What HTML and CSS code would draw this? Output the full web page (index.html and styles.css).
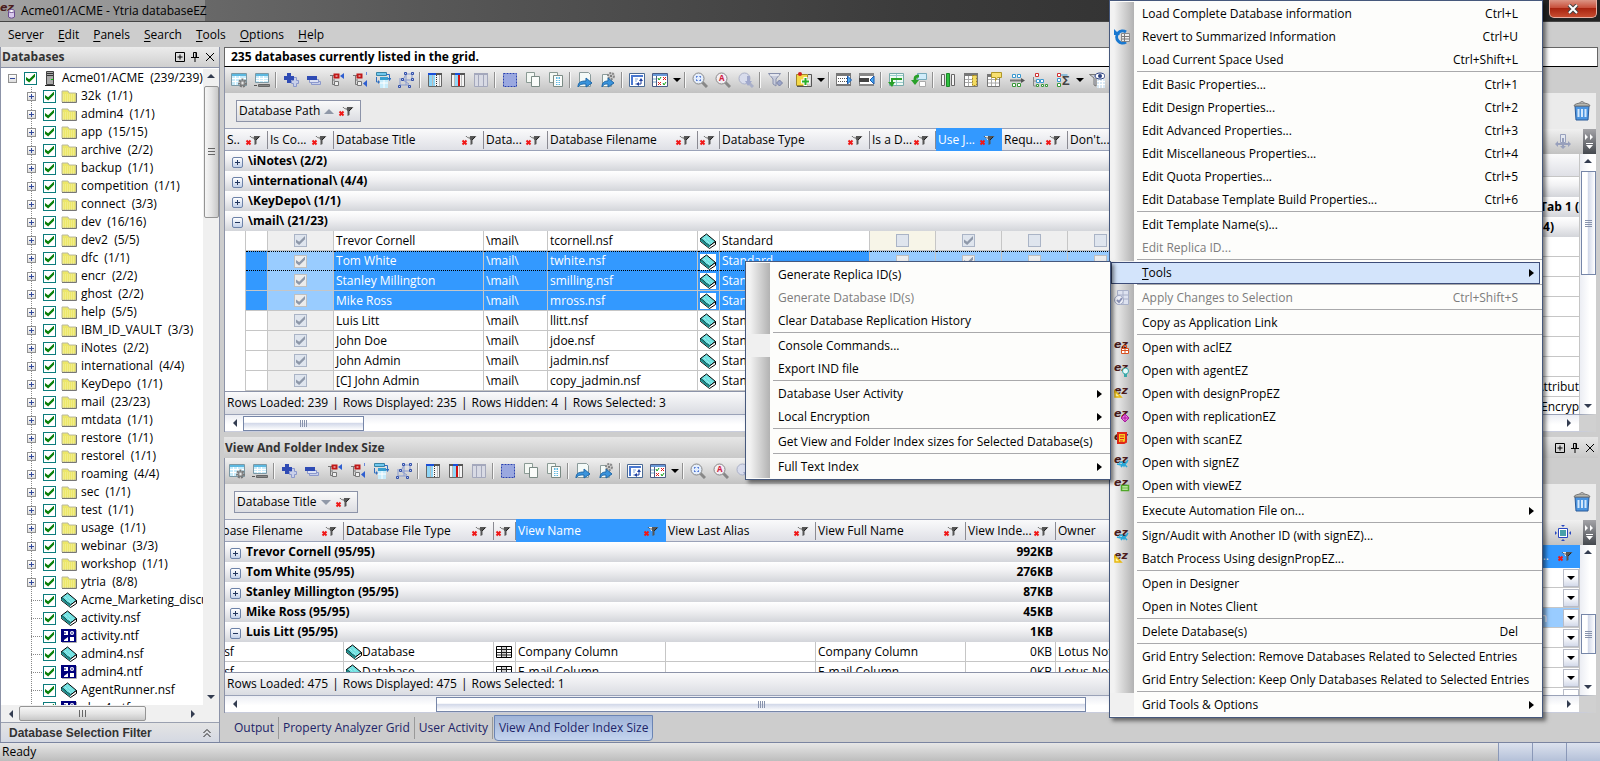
FILE: index.html
```html
<!DOCTYPE html>
<html lang="en">
<head>
    <meta charset="UTF-8">
    <meta name="viewport" content="width=device-width, initial-scale=1.0">
    <title>Acme01/ACME - Ytria databaseEZ</title>
    <link rel="stylesheet" href="styles.css">
</head>
<body>
    <!-- Icon sprite -->
    <svg class="sprite" aria-hidden="true">
        <symbol id="folder" viewBox="0 0 16 16"><path d="M1 3h6l1 2h7v9H1z" fill="#ece76a" stroke="#b9b9a0"/><path d="M2 7h12M2 9h12M2 11h12M2 13h12" stroke="#f7f3a8" stroke-dasharray="1 1"/><path d="M15.500 5v9.500H1" fill="none" stroke="#777"/></symbol>
        <symbol id="book" viewBox="0 0 16 16"><path d="M.5 5.500L6.500 1 15.500 8.500 9.500 13z" fill="#6fe0e0" stroke="#000"/><path d="M.5 5.500v3L9.500 15.500 15.500 11.500v-3L9.500 13z" fill="#fff" stroke="#000"/><path d="M.5 6.500L9.500 14" stroke="#1a8c8c" stroke-width="2" fill="none"/><path d="M4 5l6 6M6 3.500l6 6" stroke="#b8f8f8" stroke-dasharray="1 1"/></symbol>
        <symbol id="ntf" viewBox="0 0 16 16"><path d="M0 1h15v13H0z" fill="#00007c"/><path d="M15.500 2v12.500H1" stroke="#aaa" fill="none"/><path d="M3 3h4v4H3zM9 9h4v4H9z" fill="#fff"/><path d="M3 12l4-3v4H3z" fill="#fff"/><circle cx="11" cy="5" r="2" fill="#fff"/><path d="M3 5h2M10 5h2" stroke="#00007c"/></symbol>
        <symbol id="server" viewBox="0 0 16 16"><path d="M4.500 1.500h7v13h-7z" fill="#a9a9a9" stroke="#444"/><path d="M5 3.500h6M5 5.500h6" stroke="#333"/><path d="M9 9h2v1H9z" fill="#0c0"/><path d="M3 15.500h10" stroke="#222"/></symbol>
        <symbol id="filterx" viewBox="0 0 16 16"><path d="M4.500 4H15.500L11.500 8v4L9.500 13V8z" fill="#555"/><path d="M6 4.500h3M7 6h2M8 7.500h1" stroke="#e8e8e8"/><path d="M14 5l-3 3" stroke="#222"/><path d="M1.500 8.500l4 4M5.500 8.500l-4 4" stroke="#f01818" stroke-width="2"/></symbol>
        <symbol id="gridgear" viewBox="0 0 16 16"><path d="M.5 1.500h15v12H.5z" fill="#c8ecfb" stroke="#7c98a4"/><path d="M1 2h14v2H1z" fill="#5cb8e0"/><path d="M1 6.500h14M1 9.500h10M4.500 4v9M8.500 4v9" stroke="#fff"/><circle cx="11.500" cy="11" r="3.500" fill="none" stroke="#777" stroke-width="2" stroke-dasharray="2 1"/><circle cx="11.500" cy="11" r="2.500" fill="#aaa" stroke="#777"/><circle cx="11.500" cy="11" r="1" fill="#eee"/></symbol>
        <symbol id="gridbar" viewBox="0 0 16 16"><path d="M1.500 1.500h13v9h-13z" fill="#c8ecfb" stroke="#7c98a4"/><path d="M2 2h12v2H2z" fill="#5cb8e0"/><path d="M2 6.500h12M2 8.500h12M5.500 4v6M9.500 4v6" stroke="#fff"/><path d="M4.500 12.500h11v2h-11z" fill="#888" stroke="#666"/><path d="M0 13.500h3" stroke="#555"/></symbol>
        <symbol id="plus" viewBox="0 0 16 16"><path d="M8.500 8.500h2v-3h3v3h2v3h-2v3h-3v-3h-2z" fill="#c9d0ea" stroke="#8b98cc"/><path d="M4 1h4v3h3v4H8v3H4V8H1V4h3z" fill="#2f4bb4"/></symbol>
        <symbol id="minus" viewBox="0 0 16 16"><path d="M5.500 9.500h9v3h-9z" fill="#c9d0ea" stroke="#8b98cc"/><path d="M3.500 7.500h9v3h-9z" fill="#dde2f4" stroke="#8b98cc"/><path d="M1 4h10v4H1z" fill="#2f4bb4"/></symbol>
        <symbol id="treeup" viewBox="0 0 16 16"><path d="M1 3.500h4M3.500 3v9.500H6M3.500 8H6" stroke="#777" fill="none"/><path d="M5.500 2.500h4v3h-4z" fill="#fff" stroke="#c01818" stroke-width="2"/><path d="M5.500 9.500h4v4h-4z" fill="#eee" stroke="#777"/><path d="M15 1v6l-4-3z" fill="#2f5fd0"/></symbol>
        <symbol id="treedown" viewBox="0 0 16 16"><path d="M1 3.500h4M3.500 3v9.500H6M3.500 8H6" stroke="#777" fill="none"/><path d="M5.500 2.500h4v3h-4z" fill="#fff" stroke="#c01818" stroke-width="2"/><path d="M5.500 9.500h4v4h-4z" fill="#eee" stroke="#777"/><path d="M15 8v7l-4-3.500z" fill="#2f5fd0"/><path d="M14.500 0v3" stroke="#6a86d8"/></symbol>
        <symbol id="pivot" viewBox="0 0 16 16"><path d="M1.500.500h10v3h-10z" fill="#6fc8ee" stroke="#3a84a4"/><path d="M5 6h8v10H5z" fill="#c8ecfb"/><path d="M5 5h8v3H5z" fill="#3aa0d0"/><path d="M9 8v8M5 11h8" stroke="#fff"/><path d="M11 2.500h3.500v5M1.500 5v5H4" fill="none" stroke="#2f6fc0"/><path d="M12.500 6h4l-2 3zM3 8v4l2-2z" fill="#2f6fc0"/></symbol>
        <symbol id="nodes" viewBox="0 0 16 16"><path d="M8 2L5 8l6 4M14 2H8M14 8H5M2 13h9M2 6v7M14 2v6M8 2v11" stroke="#8a9cd0" fill="none"/><g fill="#b8c8f4" stroke="#3350a8"><path d="M6.500.5h2v2h-2zM13.500.5h2v2h-2zM3.500 6.500h2v2h-2zM13.500 6.500h2v2h-2zM.5 13.500h2v2h-2zM10.500 13.500h2v2h-2z"/></g></symbol>
        <symbol id="coldots" viewBox="0 0 16 16"><path d="M1.500 1.500h13v13h-13z" fill="#f4f4f4" stroke="#666"/><path d="M2 2h6v12H2z" fill="#8fd6f6"/><path d="M1 1h14v2H1z" fill="#555"/><path d="M1 1h8v2H1z" fill="#1a4fd8"/><path d="M9.500 3v11" stroke="#333" stroke-dasharray="1 1"/><path d="M5.500 3v11M12.500 3v11" stroke="#bbb"/></symbol>
        <symbol id="colred" viewBox="0 0 16 16"><path d="M1.500 1.500h13v13h-13z" fill="#f4f4f4" stroke="#666"/><path d="M5 3h3v11H5z" fill="#8fd6f6"/><path d="M1 1h14v2H1z" fill="#555"/><path d="M5 1h5v2H5z" fill="#1a4fd8"/><path d="M9 3v11" stroke="#d01010" stroke-width="2"/><path d="M4.500 3v11M11.500 3v11" stroke="#bbb"/></symbol>
        <symbol id="colgray" viewBox="0 0 16 16"><path d="M1.500 1.500h13v13h-13z" fill="#d8dae4" stroke="#a4a8bc"/><path d="M1 1h14v2H1z" fill="#a4a8bc"/><path d="M5.500 3v11M10.500 3v11" stroke="#a4a8bc"/></symbol>
        <symbol id="selectall" viewBox="0 0 16 16"><path d="M1.500 1.500h13v13h-13z" fill="#9aa8e0" stroke="#2840b0" stroke-dasharray="2 1"/></symbol>
        <symbol id="copy" viewBox="0 0 16 16"><path d="M1.500.5h8v10h-8z" fill="#f4f8f4" stroke="#8a9a94"/><path d="M6.500 4.500h8v10h-8z" fill="#fafcfa" stroke="#7a8a84"/></symbol>
        <symbol id="copygrid" viewBox="0 0 16 16"><path d="M1.500.5h8v10h-8z" fill="#f4f8f4" stroke="#8a9a94"/><path d="M5.500 3.500h9v11h-9z" fill="#fafcfa" stroke="#7a8a84"/><path d="M8 5h4v8H8z" fill="#5cb8e0"/><path d="M8 7.500h4M8 9.500h4M8 11.500h4M10 5v8" stroke="#fff"/></symbol>
        <symbol id="export" viewBox="0 0 16 16"><path d="M2.500.5h9l2 2v12h-11z" fill="#f4faf8" stroke="#8a9a9a"/><path d="M1 15c0-5 3-6 8-6V6l6 5-6 4v-3c-4 0-6 0-8 3z" fill="#3a94dc" stroke="#2068a8"/></symbol>
        <symbol id="exportgear" viewBox="0 0 16 16"><path d="M2.500 2.500h9v12h-9z" fill="#f4faf8" stroke="#8a9a9a"/><circle cx="11" cy="4" r="3" fill="#ccc" stroke="#888" stroke-width="2" stroke-dasharray="2 1"/><circle cx="11" cy="4" r="1" fill="#666"/><path d="M2 15c0-5 3-6 6-6V6l6 5-6 4v-3c-3 0-4 0-6 3z" fill="#3a94dc" stroke="#2068a8"/></symbol>
        <symbol id="gridarrow" viewBox="0 0 16 16"><path d="M.5 1.500h15v13H.5z" fill="#fff" stroke="#4a6a94"/><path d="M2 3h12v2H2zM2 5h2v8H2z" fill="#4a78d0"/><path d="M6 7h3M6 9h2M6 12h3" stroke="#8ad"/><path d="M9 12h3V8" stroke="#2040a0" fill="none"/><path d="M10 9l2-3 2 3zM10 10v4l-3-2z" fill="#2040a0"/></symbol>
        <symbol id="gridchecks" viewBox="0 0 16 16"><path d="M.5 1.500h15v13H.5z" fill="#fff" stroke="#4a5a84"/><path d="M1 2h14v2H1z" fill="#6a9ad8"/><path d="M4.500 4v10" stroke="#4a5a84"/><path d="M1 7h3M1 10h3" stroke="#7ac"/><path d="M6 6l1 2 2-3M11 11l1 2 2-3" stroke="#18a018" fill="none"/><path d="M11 5l3 3M14 5l-3 3M6 10l3 3M9 10l-3 3" stroke="#e01818"/></symbol>
        <symbol id="zoomfit" viewBox="0 0 16 16"><path d="M10 10l5 5" stroke="#888" stroke-width="3"/><circle cx="6.500" cy="6.500" r="5.500" fill="#e4eefc" stroke="#888"/><path d="M4.500 5.500v-1h1M7.500 4.500h1v1M8.500 7.500v1h-1M5.500 8.500h-1v-1" stroke="#2050c8" fill="none"/></symbol>
        <symbol id="zooma" viewBox="0 0 16 16"><path d="M10 10l5 5" stroke="#888" stroke-width="3"/><circle cx="6.500" cy="6.500" r="5.500" fill="#f4eef4" stroke="#888"/><text x="4" y="9" font-size="8" font-weight="bold" fill="#d02040">A</text></symbol>
        <symbol id="zoomdown" viewBox="0 0 16 16"><path d="M10 10l5 5" stroke="#aab0c8" stroke-width="3"/><circle cx="6.500" cy="6.500" r="5.500" fill="#d8dcec" stroke="#aab0c8"/><path d="M9 4h3v5h2l-4 5-3-5h2z" fill="#a0a8cc"/></symbol>
        <symbol id="funnel" viewBox="0 0 16 16"><path d="M1.500 1.500h12L9 7v7l-3-2V7z" fill="#c8ccdc" stroke="#8890ac"/><path d="M3 3h9" stroke="#fff"/><path d="M12.500 8l3 3-3 3-3-3z" fill="#9aa4c8" stroke="#7880a4"/></symbol>
        <symbol id="noteadd" viewBox="0 0 16 16"><path d="M.5 2.500h11v11H.5z" fill="#f4d848" stroke="#a08828"/><path d="M12 2.500h3.500v12H1" fill="none" stroke="#555"/><path d="M9.500 5v9M5 9.500h9" stroke="#fff" stroke-width="4"/><path d="M9.500 6v7M6 9.500h7" stroke="#28b028" stroke-width="2"/><circle cx="4" cy="2" r="2" fill="#d02020"/></symbol>
        <symbol id="rowin" viewBox="0 0 16 16"><path d="M.5 2.500h14v11H.5z" fill="#fff" stroke="#777"/><path d="M0 1h15v3H0zM0 12h15v2H0z" fill="#777"/><path d="M2 6.500h9M2 9.500h9" stroke="#555" stroke-dasharray="1 1"/><path d="M11.500 4l4 4-4 4z" fill="#48a8f0" stroke="#1858b0"/></symbol>
        <symbol id="rowout" viewBox="0 0 16 16"><path d="M.5 2.500h14v11H.5z" fill="#fff" stroke="#777"/><path d="M0 1h15v3H0zM0 12h15v2H0z" fill="#888"/><path d="M0 6h10v4H0z" fill="#444"/><path d="M15 4v8l-4-4z" fill="#48a8f0" stroke="#1858b0"/></symbol>
        <symbol id="greenrow" viewBox="0 0 16 16"><path d="M1.500 1.500h14v12h-14z" fill="#f0faf4" stroke="#7aa"/><path d="M2 3.500h13M2 10.500h13M8.500 2v11" stroke="#9cc"/><path d="M14 7H4v4" fill="none" stroke="#28a028" stroke-width="2"/><path d="M0 10h7l-3 5z" fill="#28a028"/></symbol>
        <symbol id="greengrid" viewBox="0 0 16 16"><path d="M6.500 1.500h9v6h-9z" fill="#d0ecfa" stroke="#7ab"/><path d="M8.500 9.500h6v5h-6z" fill="#fff" stroke="#aaa"/><path d="M8 4c-4 0-4 1-4 5" fill="none" stroke="#28a028" stroke-width="3"/><path d="M0 8h8l-4 5z" fill="#28a028"/></symbol>
        <symbol id="colgreen" viewBox="0 0 16 16"><path d="M1.500 2.500h3v11h-3zM11.500 2.500h3v11h-3z" fill="#f4f4f4" stroke="#666"/><path d="M6.500 1.500h3v13h-3z" fill="#30c040" stroke="#1a8828"/></symbol>
        <symbol id="colyellow" viewBox="0 0 16 16"><path d="M1.500 2.500h13v12h-13z" fill="#fff" stroke="#777"/><path d="M1 1h14v3H1z" fill="#777"/><path d="M2 7.500h8M2 10.500h8M5.500 4v10" stroke="#aaa"/><path d="M9.500 3.500h4v10h-4z" fill="#f4dc60" stroke="#a88818" stroke-dasharray="2 1"/></symbol>
        <symbol id="gridnote" viewBox="0 0 16 16"><path d="M1.500 3.500h12v11h-12z" fill="#fff" stroke="#777"/><path d="M2 7.500h11M2 11h11M5.500 4v10M9.500 4v10" stroke="#aaa"/><path d="M1 2h8v3H1z" fill="#777"/><path d="M5.500.5h10v5h-4l-2 3V5.500h-4z" fill="#f8e070" stroke="#b09828"/></symbol>
        <symbol id="groups" viewBox="0 0 16 16"><path d="M1 8.500h13" stroke="#777" stroke-width="2"/><path d="M12 6v5l4-2.500z" fill="#555"/><path d="M3.500 2.500h3v3h-3zM8.500 2.500h3v3h-3z" fill="#fff" stroke="#3a98d0"/><path d="M3.500 11.500h3v3h-3zM8.500 11.500h3v3h-3z" fill="#fff" stroke="#389838"/></symbol>
        <symbol id="grouptree" viewBox="0 0 16 16"><path d="M1.500 5v9H6M1 9h4" stroke="#888" fill="none"/><path d="M3.500 1.500h3v3h-3z" fill="#fff" stroke="#d03030"/><path d="M4.500 7.500h3v3h-3zM8.500 7.500h3v3h-3z" fill="#fff" stroke="#3a98d0"/><path d="M4.500 12.500h2v2h-2zM9.500 12.500h2v2h-2zM13.500 12.500h2v2h-2z" fill="#fff" stroke="#389838"/></symbol>
        <symbol id="groupsum" viewBox="0 0 16 16"><path d="M2.500 1.500h3v3h-3z" fill="#fff" stroke="#d03030"/><path d="M2.500 6.500h3v3h-3zM5.500 3h7" fill="#fff" stroke="#3a98d0"/><path d="M2.500 11.500h3v3h-3z" fill="#fff" stroke="#389838"/><text x="7" y="13" font-size="13" font-weight="bold" fill="#444">Σ</text></symbol>
        <symbol id="eye" viewBox="0 0 16 16"><path d="M.5 2.500h9L7 6v8l-2-1V6z" fill="#c8ccd8" stroke="#777"/><path d="M8 7h8v9H8z" fill="#d8e8f4"/><path d="M8 9.500h8M8 12.500h8M10.500 7v9M13.500 7v9" stroke="#fff"/><ellipse cx="11" cy="4" rx="5" ry="3" fill="#fff" stroke="#2a3f80"/><circle cx="11" cy="4" r="2" fill="#2a3f80"/></symbol>
        <symbol id="viewcol" viewBox="0 0 16 16"><path d="M.5 2.500h15v11H.5z" fill="#fff" stroke="#000"/><path d="M6 3h4v10H6z" fill="#ccc"/><path d="M1 5.500h14M1 8.500h14M1 11h14M5.500 3v10M10.500 3v10" stroke="#222"/></symbol>
        <symbol id="refresh" viewBox="0 0 16 16"><path d="M12 3A6 6 0 1 0 12 13" fill="none" stroke="#1878d0" stroke-width="3"/><path d="M0 0v6h6z" fill="#1878d0"/><path d="M7.500 4.500h8v8h-8z" fill="#eee" stroke="#888"/><path d="M8 7.500h7M8 10h7M10.500 5v8" stroke="#777"/></symbol>
        <symbol id="apply" viewBox="0 0 16 16"><path d="M3.500.5h11v14h-11z" fill="#dde2f0" stroke="#a8b0c8"/><path d="M4 5h10M4 9h10M9 1v13" stroke="#a8b0c8"/><circle cx="5" cy="10" r="4.500" fill="#eef0f8" stroke="#a0a8c4"/><path d="M3 10l2 2 3-4" fill="none" stroke="#8890b4" stroke-width="2"/></symbol>
        <symbol id="ez" viewBox="0 0 16 16"><text class="logo" x="0" y="8">ez</text></symbol>
        <symbol id="acl" viewBox="0 0 16 16"><use href="#ez"/><path d="M9.500 8V5.500h3V8" fill="none" stroke="#d85020"/><path d="M7.500 8.500h7v5h-7z" fill="#fff" stroke="#d85020"/><path d="M7 10.500h8M11 9v5" stroke="#d85020"/></symbol>
        <symbol id="agent" viewBox="0 0 16 16"><use href="#ez"/><circle cx="11.500" cy="8" r="3" fill="#e8fcfc" stroke="#38a8a8"/><path d="M10 11h3v3h-3z" fill="#38a8a8"/></symbol>
        <symbol id="design" viewBox="0 0 16 16"><use href="#ez"/><path d="M1 5v6h6z" fill="#fff4a0" stroke="#e8b810" stroke-width="1.500"/></symbol>
        <symbol id="repl" viewBox="0 0 16 16"><use href="#ez"/><path d="M11 5l4 4-4 4-4-4z" fill="#f080e0" stroke="#a818a0"/><path d="M7 9h8M11 5v8" stroke="#a818a0"/></symbol>
        <symbol id="scan" viewBox="0 0 16 16"><use href="#ez"/><path d="M4 1h8v9l-2 1H4z" fill="#f8c820" stroke="#e02818" stroke-width="2"/><path d="M6 4h4M6 6.500h4M6 9h3" stroke="#e02818"/></symbol>
        <symbol id="sign" viewBox="0 0 16 16"><use href="#ez"/><path d="M5 8l3-1 2 4 4-6M7 12c2-3 4-3 6 0M3 9l4 1 5-2" fill="none" stroke="#28a8d8" stroke-width="1.500"/></symbol>
        <symbol id="view" viewBox="0 0 16 16"><use href="#ez"/><path d="M7.500 7.500h7v5h-7z" fill="#d8f8c0" stroke="#50a828" stroke-width="1.500"/><path d="M8 10h6" stroke="#50a828"/></symbol>
        <symbol id="dbez" viewBox="0 0 16 16"><use href="#ez"/><path d="M8.500 8v6c2 1.500 4 1.500 6 0V8z" fill="#d8c8ec" stroke="#6a4c90"/><ellipse cx="11.500" cy="8" rx="3" ry="1.500" fill="#fff" stroke="#6a4c90"/></symbol>
        <symbol id="trash" viewBox="0 0 18 20"><path d="M2 5h14l-1 14H3z" fill="#4a94e0" stroke="#2a5a98"/><path d="M5.500 8v8M9 8v8M12.500 8v8" stroke="#d4e8fc" stroke-width="2"/><path d="M7 2c0-2 4-2 4 0" fill="none" stroke="#777"/><path d="M1 5c0-4 16-4 16 0z" fill="#b8b8b0" stroke="#777"/></symbol>
        <symbol id="print" viewBox="0 0 16 16"><path d="M5.500.5h5v8h-5z" fill="#e4e8f0" stroke="#98a0bc"/><path d="M1 10h14M8 4v8" stroke="#98a0bc" stroke-width="2"/><path d="M3 7l-3 3 3 3zM13 7l3 3-3 3zM5 12h6l-3 3z" fill="#98a0bc"/></symbol>
        <symbol id="fit" viewBox="0 0 16 16"><path d="M3.500 3.500h9v9h-9z" fill="#fff" stroke="#2848c0"/><path d="M5 5h6v6H5z" fill="#48a0a8"/><path d="M0 6v4l2-2zM16 6v4l-2-2zM6 0h4L8 2zM6 16h4l-2-2z" fill="#2848c0"/></symbol>
        <symbol id="box" viewBox="0 0 10 10"><path d="M.5.500h9v9h-9zM2.500 5h5M5 2.500v5" fill="none" stroke="#000"/></symbol>
        <symbol id="pin" viewBox="0 0 10 10"><path d="M3.500 5.500v-5h3v5M1 5.500h8M5 6v4" fill="none" stroke="#000"/><path d="M5.500 1h1.500v5H5.500z"/></symbol>
        <symbol id="close" viewBox="0 0 10 10"><path d="M1 1l8 8M9 1L1 9" stroke="#000"/></symbol>
        <symbol id="winclose" viewBox="0 0 12 10"><path d="M2 1l8 8M10 1L2 9" stroke="#444" stroke-width="4"/><path d="M2 1l8 8M10 1L2 9" stroke="#fff" stroke-width="2"/></symbol>
        <symbol id="chev" viewBox="0 0 10 10"><path d="M1.500 5L5 1.500 8.500 5M1.500 9L5 5.500 8.500 9" fill="none" stroke="#222"/></symbol>
        <symbol id="options" viewBox="0 0 11 20"><path d="M1 2l3 3-3 3zM6 2l3 3-3 3zM2 13h7l-3.500 4z" fill="#fff"/><path d="M2 11.500h7" stroke="#fff"/></symbol>
    </svg>

    <header class="titlebar">
        <svg class="icon"><use href="#dbez"/></svg>
        <span class="caption">Acme01/ACME - Ytria databaseEZ</span>
        <button class="win-close" aria-label="Close"><svg><use href="#winclose"/></svg></button>
    </header>

    <nav class="menubar">
        <button>Ser<u>v</u>er</button>
        <button><u>E</u>dit</button>
        <button><u>P</u>anels</button>
        <button><u>S</u>earch</button>
        <button><u>T</u>ools</button>
        <button><u>O</u>ptions</button>
        <button><u>H</u>elp</button>
    </nav>

    <div class="workspace">
        <!-- Database tree -->
        <aside class="sidebar">
            <div class="panel-title">
                <h2>Databases</h2>
                <button aria-label="Maximize"><svg><use href="#box"/></svg></button>
                <button aria-label="Pin"><svg><use href="#pin"/></svg></button>
                <button aria-label="Close"><svg><use href="#close"/></svg></button>
            </div>
            <div class="tree-box">
                <div class="tree-view">
                    <div class="root"><button class="exp minus" aria-label="Collapse"></button><label><input type="checkbox" checked><svg class="icon"><use href="#server"/></svg>Acme01/ACME&nbsp; (239/239)</label></div>
                    <ul class="tree">
                        <li><button class="exp" aria-label="Expand"></button><label><input type="checkbox" checked><svg class="icon"><use href="#folder"/></svg>32k&nbsp; (1/1)</label></li>
                        <li><button class="exp" aria-label="Expand"></button><label><input type="checkbox" checked><svg class="icon"><use href="#folder"/></svg>admin4&nbsp; (1/1)</label></li>
                        <li><button class="exp" aria-label="Expand"></button><label><input type="checkbox" checked><svg class="icon"><use href="#folder"/></svg>app&nbsp; (15/15)</label></li>
                        <li><button class="exp" aria-label="Expand"></button><label><input type="checkbox" checked><svg class="icon"><use href="#folder"/></svg>archive&nbsp; (2/2)</label></li>
                        <li><button class="exp" aria-label="Expand"></button><label><input type="checkbox" checked><svg class="icon"><use href="#folder"/></svg>backup&nbsp; (1/1)</label></li>
                        <li><button class="exp" aria-label="Expand"></button><label><input type="checkbox" checked><svg class="icon"><use href="#folder"/></svg>competition&nbsp; (1/1)</label></li>
                        <li><button class="exp" aria-label="Expand"></button><label><input type="checkbox" checked><svg class="icon"><use href="#folder"/></svg>connect&nbsp; (3/3)</label></li>
                        <li><button class="exp" aria-label="Expand"></button><label><input type="checkbox" checked><svg class="icon"><use href="#folder"/></svg>dev&nbsp; (16/16)</label></li>
                        <li><button class="exp" aria-label="Expand"></button><label><input type="checkbox" checked><svg class="icon"><use href="#folder"/></svg>dev2&nbsp; (5/5)</label></li>
                        <li><button class="exp" aria-label="Expand"></button><label><input type="checkbox" checked><svg class="icon"><use href="#folder"/></svg>dfc&nbsp; (1/1)</label></li>
                        <li><button class="exp" aria-label="Expand"></button><label><input type="checkbox" checked><svg class="icon"><use href="#folder"/></svg>encr&nbsp; (2/2)</label></li>
                        <li><button class="exp" aria-label="Expand"></button><label><input type="checkbox" checked><svg class="icon"><use href="#folder"/></svg>ghost&nbsp; (2/2)</label></li>
                        <li><button class="exp" aria-label="Expand"></button><label><input type="checkbox" checked><svg class="icon"><use href="#folder"/></svg>help&nbsp; (5/5)</label></li>
                        <li><button class="exp" aria-label="Expand"></button><label><input type="checkbox" checked><svg class="icon"><use href="#folder"/></svg>IBM_ID_VAULT&nbsp; (3/3)</label></li>
                        <li><button class="exp" aria-label="Expand"></button><label><input type="checkbox" checked><svg class="icon"><use href="#folder"/></svg>iNotes&nbsp; (2/2)</label></li>
                        <li><button class="exp" aria-label="Expand"></button><label><input type="checkbox" checked><svg class="icon"><use href="#folder"/></svg>international&nbsp; (4/4)</label></li>
                        <li><button class="exp" aria-label="Expand"></button><label><input type="checkbox" checked><svg class="icon"><use href="#folder"/></svg>KeyDepo&nbsp; (1/1)</label></li>
                        <li><button class="exp" aria-label="Expand"></button><label><input type="checkbox" checked><svg class="icon"><use href="#folder"/></svg>mail&nbsp; (23/23)</label></li>
                        <li><button class="exp" aria-label="Expand"></button><label><input type="checkbox" checked><svg class="icon"><use href="#folder"/></svg>mtdata&nbsp; (1/1)</label></li>
                        <li><button class="exp" aria-label="Expand"></button><label><input type="checkbox" checked><svg class="icon"><use href="#folder"/></svg>restore&nbsp; (1/1)</label></li>
                        <li><button class="exp" aria-label="Expand"></button><label><input type="checkbox" checked><svg class="icon"><use href="#folder"/></svg>restorel&nbsp; (1/1)</label></li>
                        <li><button class="exp" aria-label="Expand"></button><label><input type="checkbox" checked><svg class="icon"><use href="#folder"/></svg>roaming&nbsp; (4/4)</label></li>
                        <li><button class="exp" aria-label="Expand"></button><label><input type="checkbox" checked><svg class="icon"><use href="#folder"/></svg>sec&nbsp; (1/1)</label></li>
                        <li><button class="exp" aria-label="Expand"></button><label><input type="checkbox" checked><svg class="icon"><use href="#folder"/></svg>test&nbsp; (1/1)</label></li>
                        <li><button class="exp" aria-label="Expand"></button><label><input type="checkbox" checked><svg class="icon"><use href="#folder"/></svg>usage&nbsp; (1/1)</label></li>
                        <li><button class="exp" aria-label="Expand"></button><label><input type="checkbox" checked><svg class="icon"><use href="#folder"/></svg>webinar&nbsp; (3/3)</label></li>
                        <li><button class="exp" aria-label="Expand"></button><label><input type="checkbox" checked><svg class="icon"><use href="#folder"/></svg>workshop&nbsp; (1/1)</label></li>
                        <li><button class="exp" aria-label="Expand"></button><label><input type="checkbox" checked><svg class="icon"><use href="#folder"/></svg>ytria&nbsp; (8/8)</label></li>
                        <li class="leaf"><label><input type="checkbox" checked><svg class="icon"><use href="#book"/></svg>Acme_Marketing_discussion.nsf</label></li>
                        <li class="leaf"><label><input type="checkbox" checked><svg class="icon"><use href="#book"/></svg>activity.nsf</label></li>
                        <li class="leaf"><label><input type="checkbox" checked><svg class="icon"><use href="#ntf"/></svg>activity.ntf</label></li>
                        <li class="leaf"><label><input type="checkbox" checked><svg class="icon"><use href="#book"/></svg>admin4.nsf</label></li>
                        <li class="leaf"><label><input type="checkbox" checked><svg class="icon"><use href="#ntf"/></svg>admin4.ntf</label></li>
                        <li class="leaf"><label><input type="checkbox" checked><svg class="icon"><use href="#book"/></svg>AgentRunner.nsf</label></li>
                        <li class="leaf"><label><input type="checkbox" checked><svg class="icon"><use href="#ntf"/></svg>alog4.ntf</label></li>
                    </ul>
                </div>
                <div class="vbar soft"><i class="up"></i><span class="thumb tree-v"></span><i class="down"></i></div>
            </div>
            <div class="hbar soft"><i class="left"></i><span class="thumb tree-h"></span><i class="right"></i></div>
            <div class="panel-title filter-title">
                <h2>Database Selection Filter</h2>
                <button aria-label="Expand filter"><svg><use href="#chev"/></svg></button>
            </div>
        </aside>

        <main class="content">
            <p class="infobar">235 databases currently listed in the grid.</p>

            <div class="upper">
                <section class="grid-panel">
                    <div class="toolbar">
                        <button aria-label="Grid settings"><svg class="icon"><use href="#gridgear"/></svg></button>
                        <button aria-label="Grid bar"><svg class="icon"><use href="#gridbar"/></svg></button>
                        <span class="split"></span>
                        <button aria-label="Expand all"><svg class="icon"><use href="#plus"/></svg></button>
                        <button aria-label="Collapse all"><svg class="icon"><use href="#minus"/></svg></button>
                        <button aria-label="Expand level"><svg class="icon"><use href="#treeup"/></svg></button>
                        <button aria-label="Collapse level"><svg class="icon"><use href="#treedown"/></svg></button>
                        <button aria-label="Pivot"><svg class="icon"><use href="#pivot"/></svg></button>
                        <button aria-label="Hierarchy"><svg class="icon"><use href="#nodes"/></svg></button>
                        <span class="split"></span>
                        <button aria-label="Freeze columns"><svg class="icon"><use href="#coldots"/></svg></button>
                        <button aria-label="Freeze here"><svg class="icon"><use href="#colred"/></svg></button>
                        <button aria-label="Unfreeze"><svg class="icon"><use href="#colgray"/></svg></button>
                        <span class="split"></span>
                        <button aria-label="Select all"><svg class="icon"><use href="#selectall"/></svg></button>
                        <button aria-label="Copy"><svg class="icon"><use href="#copy"/></svg></button>
                        <button aria-label="Copy grid"><svg class="icon"><use href="#copygrid"/></svg></button>
                        <span class="split"></span>
                        <button aria-label="Export"><svg class="icon"><use href="#export"/></svg></button>
                        <button aria-label="Export options"><svg class="icon"><use href="#exportgear"/></svg></button>
                        <span class="split"></span>
                        <button aria-label="Transpose"><svg class="icon"><use href="#gridarrow"/></svg></button>
                        <button aria-label="Flag values"><svg class="icon"><use href="#gridchecks"/></svg></button>
                        <button class="drop" aria-label="More"></button>
                        <span class="split"></span>
                        <button aria-label="Find"><svg class="icon"><use href="#zoomfit"/></svg></button>
                        <button aria-label="Find text"><svg class="icon"><use href="#zooma"/></svg></button>
                        <button aria-label="Find next"><svg class="icon"><use href="#zoomdown"/></svg></button>
                        <span class="split"></span>
                        <button aria-label="Filter"><svg class="icon"><use href="#funnel"/></svg></button>
                        <span class="split"></span>
                        <button aria-label="Add note"><svg class="icon"><use href="#noteadd"/></svg></button>
                        <button class="drop" aria-label="More"></button>
                        <span class="split"></span>
                        <button aria-label="Show rows"><svg class="icon"><use href="#rowin"/></svg></button>
                        <button aria-label="Hide rows"><svg class="icon"><use href="#rowout"/></svg></button>
                        <span class="split"></span>
                        <button aria-label="Fill down"><svg class="icon"><use href="#greenrow"/></svg></button>
                        <button aria-label="Load values"><svg class="icon"><use href="#greengrid"/></svg></button>
                        <span class="split"></span>
                        <button aria-label="Insert column"><svg class="icon"><use href="#colgreen"/></svg></button>
                        <button aria-label="Format column"><svg class="icon"><use href="#colyellow"/></svg></button>
                        <button aria-label="Comment"><svg class="icon"><use href="#gridnote"/></svg></button>
                        <button aria-label="Group"><svg class="icon"><use href="#groups"/></svg></button>
                        <button aria-label="Group tree"><svg class="icon"><use href="#grouptree"/></svg></button>
                        <button aria-label="Group totals"><svg class="icon"><use href="#groupsum"/></svg></button>
                        <button class="drop" aria-label="More"></button>
                        <button aria-label="Show filter"><svg class="icon"><use href="#eye"/></svg></button>
                    </div>
                    <div class="groupby"><button class="chip">Database Path<i class="sort asc"></i><svg class="icon"><use href="#filterx"/></svg></button></div>
                    <div class="grid-view">
                        <table class="grid databases">
                            <colgroup><col class="c21"><col class="c22"><col class="c66"><col class="c150"><col class="c64"><col class="c150"><col class="c22"><col class="c150"><col class="c66"><col class="c66"><col class="c66"><col class="c66"><col></colgroup>
                            <thead>
                                <tr>
                                    <th colspan="2"><div>S..<svg class="icon"><use href="#filterx"/></svg></div></th>
                                    <th><div>Is Co...<svg class="icon"><use href="#filterx"/></svg></div></th>
                                    <th><div>Database Title<svg class="icon"><use href="#filterx"/></svg></div></th>
                                    <th><div>Data...<svg class="icon"><use href="#filterx"/></svg></div></th>
                                    <th><div>Database Filename<svg class="icon"><use href="#filterx"/></svg></div></th>
                                    <th class="tight"><div><svg class="icon"><use href="#filterx"/></svg></div></th>
                                    <th><div>Database Type<svg class="icon"><use href="#filterx"/></svg></div></th>
                                    <th><div>Is a D...<svg class="icon"><use href="#filterx"/></svg></div></th>
                                    <th class="on"><div>Use J...<svg class="icon"><use href="#filterx"/></svg></div></th>
                                    <th><div>Requ...<svg class="icon"><use href="#filterx"/></svg></div></th>
                                    <th><div>Don't...<svg class="icon"><use href="#filterx"/></svg></div></th>
                                    <th></th>
                                </tr>
                            </thead>
                            <tbody>
                                <tr class="group"><th colspan="13"><button class="node" aria-label="Expand"></button>\iNotes\ (2/2)</th></tr>
                                <tr class="group"><th colspan="13"><button class="node" aria-label="Expand"></button>\international\ (4/4)</th></tr>
                                <tr class="group"><th colspan="13"><button class="node" aria-label="Expand"></button>\KeyDepo\ (1/1)</th></tr>
                                <tr class="group"><th colspan="13"><button class="node minus" aria-label="Collapse"></button>\mail\ (21/23)</th></tr>
                                <tr>
                                    <td class="indent"></td><td></td><td class="flag"><input type="checkbox" disabled checked aria-label="Is connected"></td><td>Trevor Cornell</td><td>\mail\</td><td>tcornell.nsf</td><td class="pic"><svg class="icon"><use href="#book"/></svg></td><td>Standard</td>
                                    <td class="flag warm"><input type="checkbox" disabled aria-label="Is a design"></td><td class="flag"><input type="checkbox" disabled checked aria-label="Use JavaScript"></td><td class="flag"><input type="checkbox" disabled aria-label="Require"></td><td class="flag"><input type="checkbox" disabled aria-label="Don't"></td><td></td>
                                </tr>
                                <tr class="selected focus">
                                    <td class="indent"></td><td></td><td class="flag"><input type="checkbox" disabled checked aria-label="Is connected"></td><td>Tom White</td><td>\mail\</td><td>twhite.nsf</td><td class="pic"><svg class="icon"><use href="#book"/></svg></td><td>Standard</td>
                                    <td class="flag"><input type="checkbox" disabled aria-label="Is a design"></td><td class="flag"><input type="checkbox" disabled checked aria-label="Use JavaScript"></td><td class="flag"><input type="checkbox" disabled aria-label="Require"></td><td class="flag"><input type="checkbox" disabled aria-label="Don't"></td><td></td>
                                </tr>
                                <tr class="selected">
                                    <td class="indent"></td><td></td><td class="flag"><input type="checkbox" disabled checked aria-label="Is connected"></td><td>Stanley Millington</td><td>\mail\</td><td>smilling.nsf</td><td class="pic"><svg class="icon"><use href="#book"/></svg></td><td>Standard</td><td colspan="5"></td>
                                </tr>
                                <tr class="selected">
                                    <td class="indent"></td><td></td><td class="flag"><input type="checkbox" disabled checked aria-label="Is connected"></td><td>Mike Ross</td><td>\mail\</td><td>mross.nsf</td><td class="pic"><svg class="icon"><use href="#book"/></svg></td><td>Standard</td><td colspan="5"></td>
                                </tr>
                                <tr>
                                    <td class="indent"></td><td></td><td class="flag"><input type="checkbox" disabled checked aria-label="Is connected"></td><td>Luis Litt</td><td>\mail\</td><td>llitt.nsf</td><td class="pic"><svg class="icon"><use href="#book"/></svg></td><td>Standard</td><td colspan="5"></td>
                                </tr>
                                <tr>
                                    <td class="indent"></td><td></td><td class="flag"><input type="checkbox" disabled checked aria-label="Is connected"></td><td>John Doe</td><td>\mail\</td><td>jdoe.nsf</td><td class="pic"><svg class="icon"><use href="#book"/></svg></td><td>Standard</td><td colspan="5"></td>
                                </tr>
                                <tr>
                                    <td class="indent"></td><td></td><td class="flag"><input type="checkbox" disabled checked aria-label="Is connected"></td><td>John Admin</td><td>\mail\</td><td>jadmin.nsf</td><td class="pic"><svg class="icon"><use href="#book"/></svg></td><td>Standard</td><td colspan="5"></td>
                                </tr>
                                <tr>
                                    <td class="indent"></td><td></td><td class="flag"><input type="checkbox" disabled checked aria-label="Is connected"></td><td>[C] John Admin</td><td>\mail\</td><td>copy_jadmin.nsf</td><td class="pic"><svg class="icon"><use href="#book"/></svg></td><td>Standard</td><td colspan="5"></td>
                                </tr>
                            </tbody>
                        </table>
                    </div>
                    <p class="rowcount"><span>Rows Loaded: 239</span><span>Rows Displayed: 235</span><span>Rows Hidden: 4</span><span>Rows Selected: 3</span></p>
                    <div class="hbar"><i class="left"></i><span class="thumb grid-h"></span><i class="right"></i></div>
                </section>

                <section class="side-panel">
                    <div class="side-head"></div>
                    <div class="side-trash"><button aria-label="Delete"><svg><use href="#trash"/></svg></button></div>
                    <div class="toolbar side-tools">
                        <button aria-label="Print"><svg class="icon"><use href="#print"/></svg></button>
                        <button class="overflow" aria-label="Toolbar options"><svg><use href="#options"/></svg></button>
                    </div>
                    <div class="side-body">
                        <div class="side-rows">
                            <div class="side-row head"></div>
                            <div class="side-row band"></div>
                            <div class="side-row band">Tab 1 (</div>
                            <div class="side-row band near">4)</div>
                            <div class="side-row"></div>
                            <div class="side-row"></div>
                            <div class="side-row"></div>
                            <div class="side-row"></div>
                            <div class="side-row"></div>
                            <div class="side-row"></div>
                            <div class="side-row"></div>
                            <div class="side-row">Attribut</div>
                            <div class="side-row">y Encryp</div>
                        </div>
                        <div class="vbar"><i class="up"></i><span class="thumb side-v"></span><i class="down"></i></div>
                    </div>
                    <div class="hbar corner"><i class="left"></i><i class="right"></i></div>
                </section>
            </div>

            <div class="panel-title index-title">
                <h2>View And Folder Index Size</h2>
                <button aria-label="Maximize"><svg><use href="#box"/></svg></button>
                <button aria-label="Pin"><svg><use href="#pin"/></svg></button>
                <button aria-label="Close"><svg><use href="#close"/></svg></button>
            </div>

            <div class="lower">
                <section class="grid-panel">
                    <div class="toolbar">
                        <button aria-label="Grid settings"><svg class="icon"><use href="#gridgear"/></svg></button>
                        <button aria-label="Grid bar"><svg class="icon"><use href="#gridbar"/></svg></button>
                        <span class="split"></span>
                        <button aria-label="Expand all"><svg class="icon"><use href="#plus"/></svg></button>
                        <button aria-label="Collapse all"><svg class="icon"><use href="#minus"/></svg></button>
                        <button aria-label="Expand level"><svg class="icon"><use href="#treeup"/></svg></button>
                        <button aria-label="Collapse level"><svg class="icon"><use href="#treedown"/></svg></button>
                        <button aria-label="Pivot"><svg class="icon"><use href="#pivot"/></svg></button>
                        <button aria-label="Hierarchy"><svg class="icon"><use href="#nodes"/></svg></button>
                        <span class="split"></span>
                        <button aria-label="Freeze columns"><svg class="icon"><use href="#coldots"/></svg></button>
                        <button aria-label="Freeze here"><svg class="icon"><use href="#colred"/></svg></button>
                        <button aria-label="Unfreeze"><svg class="icon"><use href="#colgray"/></svg></button>
                        <span class="split"></span>
                        <button aria-label="Select all"><svg class="icon"><use href="#selectall"/></svg></button>
                        <button aria-label="Copy"><svg class="icon"><use href="#copy"/></svg></button>
                        <button aria-label="Copy grid"><svg class="icon"><use href="#copygrid"/></svg></button>
                        <span class="split"></span>
                        <button aria-label="Export"><svg class="icon"><use href="#export"/></svg></button>
                        <button aria-label="Export options"><svg class="icon"><use href="#exportgear"/></svg></button>
                        <span class="split"></span>
                        <button aria-label="Transpose"><svg class="icon"><use href="#gridarrow"/></svg></button>
                        <button aria-label="Flag values"><svg class="icon"><use href="#gridchecks"/></svg></button>
                        <button class="drop" aria-label="More"></button>
                        <span class="split"></span>
                        <button aria-label="Find"><svg class="icon"><use href="#zoomfit"/></svg></button>
                        <button aria-label="Find text"><svg class="icon"><use href="#zooma"/></svg></button>
                        <button aria-label="Find next"><svg class="icon"><use href="#zoomdown"/></svg></button>
                    </div>
                    <div class="groupby"><button class="chip">Database Title<i class="sort desc"></i><svg class="icon"><use href="#filterx"/></svg></button></div>
                    <div class="grid-view">
                        <table class="grid views">
                            <colgroup><col class="c150"><col class="c150"><col class="c22"><col class="c150"><col class="c150"><col class="c150"><col class="c90"><col></colgroup>
                            <thead>
                                <tr>
                                    <th><div>Database Filename<svg class="icon"><use href="#filterx"/></svg></div></th>
                                    <th><div>Database File Type<svg class="icon"><use href="#filterx"/></svg></div></th>
                                    <th class="tight"><div><svg class="icon"><use href="#filterx"/></svg></div></th>
                                    <th class="on"><div>View Name<svg class="icon"><use href="#filterx"/></svg></div></th>
                                    <th><div>View Last Alias<svg class="icon"><use href="#filterx"/></svg></div></th>
                                    <th><div>View Full Name<svg class="icon"><use href="#filterx"/></svg></div></th>
                                    <th><div>View Inde...<svg class="icon"><use href="#filterx"/></svg></div></th>
                                    <th><div>Owner</div></th>
                                </tr>
                            </thead>
                            <tbody>
                                <tr class="group"><th colspan="6"><button class="node" aria-label="Expand"></button>Trevor Cornell (95/95)</th><th class="num">992KB</th><th></th></tr>
                                <tr class="group"><th colspan="6"><button class="node" aria-label="Expand"></button>Tom White (95/95)</th><th class="num">276KB</th><th></th></tr>
                                <tr class="group"><th colspan="6"><button class="node" aria-label="Expand"></button>Stanley Millington (95/95)</th><th class="num">87KB</th><th></th></tr>
                                <tr class="group"><th colspan="6"><button class="node" aria-label="Expand"></button>Mike Ross (95/95)</th><th class="num">45KB</th><th></th></tr>
                                <tr class="group"><th colspan="6"><button class="node minus" aria-label="Collapse"></button>Luis Litt (95/95)</th><th class="num">1KB</th><th></th></tr>
                                <tr><td>llitt.nsf</td><td class="typed"><svg class="icon"><use href="#book"/></svg>Database</td><td class="pic"><svg class="icon"><use href="#viewcol"/></svg></td><td>Company Column</td><td></td><td>Company Column</td><td class="num">0KB</td><td>Lotus Notes</td></tr>
                                <tr><td>llitt.nsf</td><td class="typed"><svg class="icon"><use href="#book"/></svg>Database</td><td class="pic"><svg class="icon"><use href="#viewcol"/></svg></td><td>E-mail Column</td><td></td><td>E-mail Column</td><td class="num">0KB</td><td>Lotus Notes</td></tr>
                            </tbody>
                        </table>
                    </div>
                    <p class="rowcount"><span>Rows Loaded: 475</span><span>Rows Displayed: 475</span><span>Rows Selected: 1</span></p>
                    <div class="hbar"><i class="left"></i><span class="thumb index-h"></span><i class="right"></i></div>
                </section>

                <section class="side-panel">
                    <div class="side-head"></div>
                    <div class="side-trash"><button aria-label="Delete"><svg><use href="#trash"/></svg></button></div>
                    <div class="toolbar side-tools">
                        <button aria-label="Fit"><svg class="icon"><use href="#fit"/></svg></button>
                        <button class="overflow" aria-label="Toolbar options"><svg><use href="#options"/></svg></button>
                    </div>
                    <div class="side-body">
                        <div class="side-rows">
                            <div class="side-row blue">...<svg class="icon"><use href="#filterx"/></svg></div>
                            <div class="side-row"><button class="combo" aria-label="Choose"></button></div>
                            <div class="side-row"><button class="combo" aria-label="Choose"></button></div>
                            <div class="side-row lit">n<button class="combo" aria-label="Choose"></button></div>
                            <div class="side-row"><button class="combo" aria-label="Choose"></button></div>
                            <div class="side-row"><button class="combo" aria-label="Choose"></button></div>
                            <div class="side-row"><button class="combo" aria-label="Choose"></button></div>
                            <div class="side-row"><button class="combo" aria-label="Choose"></button></div>
                        </div>
                        <div class="vbar"><i class="up"></i><span class="thumb index-v"></span><i class="down"></i></div>
                    </div>
                    <div class="hbar corner"><i class="left"></i><i class="right"></i></div>
                </section>
            </div>

            <nav class="tabs">
                <button>Output</button>
                <button>Property Analyzer Grid</button>
                <button>User Activity</button>
                <button class="active">View And Folder Index Size</button>
            </nav>
        </main>
    </div>

    <footer class="statusbar"><span>Ready</span><i></i><i></i><i></i></footer>

    <!-- Context menu -->
    <ul class="menu main-menu">
        <li><button>Load Complete Database information<kbd>Ctrl+L</kbd></button></li>
        <li><button><svg class="icon"><use href="#refresh"/></svg>Revert to Summarized Information<kbd>Ctrl+U</kbd></button></li>
        <li><button>Load Current Space Used<kbd>Ctrl+Shift+L</kbd></button></li>
        <li class="sep"></li>
        <li><button>Edit Basic Properties...<kbd>Ctrl+1</kbd></button></li>
        <li><button>Edit Design Properties...<kbd>Ctrl+2</kbd></button></li>
        <li><button>Edit Advanced Properties...<kbd>Ctrl+3</kbd></button></li>
        <li><button>Edit Miscellaneous Properties...<kbd>Ctrl+4</kbd></button></li>
        <li><button>Edit Quota Properties...<kbd>Ctrl+5</kbd></button></li>
        <li><button>Edit Database Template Build Properties...<kbd>Ctrl+6</kbd></button></li>
        <li class="sep"></li>
        <li><button>Edit Template Name(s)...</button></li>
        <li><button disabled>Edit Replica ID...</button></li>
        <li class="sep"></li>
        <li class="open plain"><button><span><u>T</u>ools</span><i class="more"></i></button></li>
        <li class="sep"></li>
        <li><button disabled><svg class="icon"><use href="#apply"/></svg>Apply Changes to Selection<kbd>Ctrl+Shift+S</kbd></button></li>
        <li class="sep"></li>
        <li><button>Copy as Application Link</button></li>
        <li class="sep"></li>
        <li><button><svg class="icon"><use href="#acl"/></svg>Open with aclEZ</button></li>
        <li><button><svg class="icon"><use href="#agent"/></svg>Open with agentEZ</button></li>
        <li><button><svg class="icon"><use href="#design"/></svg>Open with designPropEZ</button></li>
        <li><button><svg class="icon"><use href="#repl"/></svg>Open with replicationEZ</button></li>
        <li><button><svg class="icon"><use href="#scan"/></svg>Open with scanEZ</button></li>
        <li><button><svg class="icon"><use href="#sign"/></svg>Open with signEZ</button></li>
        <li><button><svg class="icon"><use href="#view"/></svg>Open with viewEZ</button></li>
        <li class="sep"></li>
        <li><button>Execute Automation File on...<i class="more"></i></button></li>
        <li class="sep"></li>
        <li><button><svg class="icon"><use href="#sign"/></svg>Sign/Audit with Another ID (with signEZ)...</button></li>
        <li><button><svg class="icon"><use href="#design"/></svg>Batch Process Using designPropEZ...</button></li>
        <li class="sep"></li>
        <li><button>Open in Designer</button></li>
        <li><button>Open in Notes Client</button></li>
        <li class="sep"></li>
        <li><button>Delete Database(s)<kbd>Del</kbd></button></li>
        <li class="sep"></li>
        <li><button>Grid Entry Selection: Remove Databases Related to Selected Entries</button></li>
        <li><button>Grid Entry Selection: Keep Only Databases Related to Selected Entries</button></li>
        <li class="sep"></li>
        <li class="plain"><button>Grid Tools &amp; Options<i class="more"></i></button></li>
    </ul>

    <!-- Tools submenu -->
    <ul class="menu sub-menu">
        <li><button>Generate Replica ID(s)</button></li>
        <li><button disabled>Generate Database ID(s)</button></li>
        <li><button>Clear Database Replication History</button></li>
        <li class="sep"></li>
        <li class="plain"><button>Console Commands...</button></li>
        <li><button>Export IND file</button></li>
        <li class="sep"></li>
        <li><button>Database User Activity<i class="more"></i></button></li>
        <li><button>Local Encryption<i class="more"></i></button></li>
        <li class="sep"></li>
        <li><button>Get View and Folder Index sizes for Selected Database(s)</button></li>
        <li class="sep"></li>
        <li><button>Full Text Index<i class="more"></i></button></li>
    </ul>
</body>
</html>
```

FILE: styles.css
```css
* {
    margin: 0;
    padding: 0;
    box-sizing: border-box;
}

body {
    display: flex;
    flex-direction: column;
    height: 100vh;
    overflow: hidden;
    background-color: #cdcdcd;
    color: #000;
    font-family: "Open Sans", "Segoe UI", sans-serif;
    font-size: 12px;
    line-height: 18px;
}

button {
    background: none;
    border: none;
    color: inherit;
    font: inherit;
    white-space: nowrap;
}

ul {
    list-style: none;
}

.sprite {
    position: absolute;
    width: 0;
    height: 0;
}

.icon {
    flex: none;
    width: 16px;
    height: 16px;
}

.logo {
    fill: #4a1c1c;
    font-family: "DejaVu Sans", sans-serif;
    font-size: 11px;
    font-style: italic;
    font-weight: bold;
}

/* Title and menu bar */
.titlebar {
    display: flex;
    flex: none;
    align-items: center;
    height: 22px;
    border-bottom: 1px solid #444;
    background: linear-gradient(to right, #a2a2a2, #8c8c8c 205px, #686868 205px, #585858 420px, #3c3c3c 900px, #222);
}

.caption {
    flex: 1;
    margin-left: 5px;
}

.win-close {
    align-self: flex-start;
    width: 48px;
    height: 18px;
    margin-right: 3px;
    border: 1px solid #eab0a4;
    border-top: none;
    border-radius: 0 0 5px 5px;
    background: linear-gradient(#dc9484, #c8503c 45%, #a82410 50%, #c84c30);
}

.win-close svg {
    display: block;
    width: 12px;
    height: 10px;
    margin: 0 auto;
}

.menubar {
    display: flex;
    flex: none;
    gap: 14px;
    height: 25px;
    padding-left: 8px;
}

.menubar u,
.menu u {
    text-underline-offset: 2px;
}

.workspace {
    display: flex;
    flex: 1;
    gap: 4px;
    min-height: 0;
    border-bottom: 1px solid #7a84a0;
}

/* Panel headings */
.panel-title {
    display: flex;
    flex: none;
    align-items: center;
    gap: 5px;
    height: 20px;
    padding: 0 4px 0 1px;
    background: linear-gradient(#ececec, #cfcfcf);
    color: #333;
}

.panel-title h2 {
    flex: 1;
    font-size: 12px;
}

.panel-title button {
    width: 10px;
    height: 10px;
}

.panel-title svg {
    display: block;
    width: 10px;
    height: 10px;
}

/* Database tree */
.sidebar {
    display: flex;
    flex: none;
    flex-direction: column;
    width: 220px;
    border-right: 1px solid #8c93a8;
    border-left: 1px solid #8c93a8;
}

.tree-box {
    display: flex;
    flex: 1;
    min-height: 0;
    padding-top: 1px;
    border-top: 1px solid #8c93a8;
    background-color: #fff;
}

.tree-view {
    flex: 1;
    overflow: hidden;
    white-space: nowrap;
}

.root,
.tree li {
    display: flex;
    align-items: center;
    height: 18px;
}

.root {
    padding-left: 7px;
}

.tree {
    background: repeating-linear-gradient(#888 0 1px, transparent 1px 2px) 30px 0 / 1px 100% no-repeat;
}

.tree li {
    padding-left: 26px;
}

.tree .leaf {
    padding-left: 42px;
    background: repeating-linear-gradient(to right, #888 0 1px, transparent 1px 2px) 30px 9px / 12px 1px no-repeat;
}

.root label,
.tree label {
    display: flex;
    align-items: center;
}

.root .icon,
.tree .icon {
    margin: 0 4px 0 5px;
}

.exp {
    flex: none;
    width: 9px;
    height: 9px;
    margin-right: 7px;
    border: 1px solid #919191;
    background:
        linear-gradient(#31489c, #31489c) 1px 3px / 5px 1px no-repeat,
        linear-gradient(#31489c, #31489c) 3px 1px / 1px 5px no-repeat,
        linear-gradient(#fff, #ddd);
}

.exp.minus {
    background:
        linear-gradient(#31489c, #31489c) 1px 3px / 5px 1px no-repeat,
        linear-gradient(#fff, #ddd);
}

input[type="checkbox"] {
    appearance: none;
    flex: none;
    width: 13px;
    height: 13px;
    border: 1px solid #0c7c7c;
    background-color: #fff;
}

input[type="checkbox"]:checked::before {
    content: "";
    display: block;
    width: 9px;
    height: 9px;
    margin: 1px;
    background-color: #0a800a;
    clip-path: polygon(0 40%, 35% 65%, 100% 0, 100% 35%, 35% 100%, 0 72%);
}

.filter-title {
    padding: 0 7px 0 8px;
    border-top: 1px solid #9aa0b0;
    background: linear-gradient(#e4e4e4, #d4d8e2);
}

.filter-title h2 {
    font-family: "Liberation Sans", Arial, sans-serif;
}

/* Scroll bars */
.vbar,
.hbar {
    display: flex;
    flex: none;
    align-items: center;
    background: linear-gradient(#eceef4, #fff 60%);
}

.vbar {
    flex-direction: column;
    width: 16px;
    background: linear-gradient(to right, #eceef4, #fff 60%);
}

.hbar {
    height: 18px;
    border-top: 1px solid #9aa2b8;
    border-bottom: 1px solid #c8ccdc;
}

.hbar.soft,
.vbar.soft {
    border: none;
    background: #f0f0f0;
}

.hbar.soft {
    height: 17px;
    padding-right: 16px;
}

.up,
.down,
.left,
.right {
    flex: none;
    border: 4px solid transparent;
}

.up {
    margin: 3px 0 8px;
    border-top-width: 2px;
    border-bottom-color: #333c50;
}

.down {
    margin: auto 0 4px;
    border-bottom-width: 2px;
    border-top-color: #333c50;
}

.left {
    margin: 0 6px 0 4px;
    border-right-color: #333c50;
}

.right {
    margin: 0 4px 0 auto;
    border-left-color: #333c50;
}

.thumb {
    flex: none;
    border: 1px solid #7686a8;
}

.vbar .thumb {
    width: 15px;
    background:
        repeating-linear-gradient(#8893ac 0 1px, transparent 1px 2px) center / 7px 7px no-repeat,
        linear-gradient(to right, #fff 40%, #d4daea 50%, #fff);
}

.hbar .thumb {
    height: 15px;
    background:
        repeating-linear-gradient(to right, #8893ac 0 1px, transparent 1px 2px) center / 7px 7px no-repeat,
        linear-gradient(#fff 40%, #d4daea 50%, #fff);
}

.soft .thumb {
    border-color: #949494;
    border-radius: 2px;
}

.vbar.soft .thumb {
    background:
        repeating-linear-gradient(#666 0 1px, transparent 1px 3px) center / 7px 8px no-repeat,
        linear-gradient(to right, #f6f6f6, #e4e4e4 50%, #c8c8c8);
}

.hbar.soft .thumb {
    background:
        repeating-linear-gradient(to right, #666 0 1px, transparent 1px 3px) center / 8px 7px no-repeat,
        linear-gradient(#f6f6f6, #e4e4e4 50%, #c8c8c8);
}

.tree-v {
    height: 132px;
}

.tree-h {
    width: 127px;
}

.grid-h {
    width: 121px;
}

.index-h {
    width: 650px;
    margin-left: 193px;
}

.side-v {
    height: 104px;
}

.index-v {
    height: 40px;
    margin-top: 52px;
}

/* Main area */
.content {
    display: flex;
    flex: 1;
    flex-direction: column;
    min-width: 0;
    padding-right: 2px;
}

.infobar {
    flex: none;
    height: 20px;
    padding-left: 6px;
    border: 1px solid #666;
    border-bottom-color: #000;
    background-color: #fff;
    font-weight: bold;
}

.upper,
.lower {
    display: flex;
    flex: none;
    gap: 4px;
    padding-right: 2px;
}

.lower {
    flex: 1;
    min-height: 0;
}

.grid-panel {
    display: flex;
    flex: 1;
    flex-direction: column;
    min-width: 0;
    border-left: 1px solid #8c93a8;
}

.toolbar {
    display: flex;
    flex: none;
    align-items: center;
    height: 26px;
    padding-left: 2px;
    background: linear-gradient(#f0f0f0, #c2c2c2);
    overflow: hidden;
}

.lower .toolbar {
    padding-left: 0;
}

.toolbar button {
    flex: none;
    width: 23px;
    height: 22px;
    padding-top: 3px;
}

.toolbar .split {
    flex: none;
    width: 2px;
    height: 16px;
    margin: 0 2px;
    border-left: 1px solid #909090;
    background-color: #f8f8f8;
}

.toolbar .drop {
    width: 11px;
    padding: 0;
}

.drop::before,
.combo::before {
    content: "";
    display: block;
    width: 0;
    margin: 0 auto;
    border: 4px solid transparent;
    border-top-color: #000;
    border-bottom: none;
}

.groupby {
    flex: none;
    height: 35px;
    padding: 7px 0 0 11px;
    background-color: #ebebeb;
}

.lower .groupby {
    padding-left: 9px;
}

.chip {
    display: flex;
    align-items: center;
    height: 22px;
    padding: 0 6px 0 2px;
    border: 1px solid #8c93a8;
    background: linear-gradient(#fafafa, #dcdde2);
}

.sort {
    width: 10px;
    margin: 0 4px;
    border: 5px solid transparent;
}

.asc {
    border-bottom-color: #9098a8;
    border-top: none;
}

.desc {
    border-top-color: #9098a8;
    border-bottom: none;
}

/* Grids */
.grid-view {
    flex: 1;
    overflow: hidden;
    background-color: #fff;
}

.grid {
    width: 100%;
    border-collapse: separate;
    border-spacing: 0;
    table-layout: fixed;
    text-align: left;
    white-space: nowrap;
}

.grid.views {
    width: calc(100% + 31px);
    margin-left: -31px;
}

.c21 { width: 21px; }
.c22 { width: 22px; }
.c64 { width: 64px; }
.c66 { width: 66px; }
.c90 { width: 90px; }
.c150 { width: 150px; }

.grid thead th {
    height: 23px;
    border-top: 1px solid #9aa2b8;
    border-bottom: 1px solid #9aa2b8;
    background: linear-gradient(#fafafb, #dfe0e6);
    font-weight: normal;
}

.grid thead div {
    display: flex;
    align-items: center;
    justify-content: space-between;
    height: 18px;
    padding: 0 6px 0 2px;
    border-right: 1px solid #8a8a92;
    overflow: hidden;
}

.grid thead .tight div {
    padding: 0 0 0 1px;
}

.grid thead th.on {
    border-color: #3399ff;
    background: #3399ff;
    color: #fff;
}

.grid thead .on div {
    border-color: #3399ff;
}

.grid .group th {
    height: 20px;
    padding-left: 7px;
    background: linear-gradient(#fff, #f2f2f4 40%, #d3d5da);
}

.grid.views .group th:first-child {
    padding-left: 36px;
}

.node {
    width: 11px;
    height: 11px;
    margin: 0 5px 0 0;
    border: 1px solid #6c82a8;
    border-radius: 2px;
    background:
        linear-gradient(#22365e, #22365e) 2px 4px / 5px 1px no-repeat,
        linear-gradient(#22365e, #22365e) 4px 2px / 1px 5px no-repeat,
        linear-gradient(#fff, #c4d2ea);
    vertical-align: -2px;
}

.node.minus {
    background:
        linear-gradient(#22365e, #22365e) 2px 4px / 5px 1px no-repeat,
        linear-gradient(#fff, #c4d2ea);
}

.grid td {
    height: 20px;
    padding-left: 2px;
    border-right: 1px solid #c6c6c6;
    border-bottom: 1px solid #c6c6c6;
    overflow: hidden;
}

.grid .indent {
    border-bottom: none;
}

.pic .icon,
.typed .icon {
    display: inline-block;
    vertical-align: middle;
}

.grid .num,
.grid .group .num {
    padding: 0 3px 0 0;
    text-align: right;
}

.grid .flag {
    padding: 0;
    background-color: #efefef;
    text-align: center;
}

.grid .warm {
    background-color: #f7f5e8;
}

.flag input[type="checkbox"] {
    display: block;
    margin: 0 auto;
    border-color: #aab4c6;
    background-color: #dfe5ee;
}

.flag input[type="checkbox"]:checked::before {
    background-color: #8f99aa;
}

.selected td {
    background-color: #3399ff;
    color: #fff;
}

.selected .indent {
    background-color: #fff;
}

.grid .selected .flag {
    background-color: #99ccff;
}

.selected .flag input[type="checkbox"] {
    border-color: #c0c0c0;
    background-color: #ececec;
}

.selected .icon {
    background-color: #fff;
}

.focus td:not(.indent) {
    border-top: 1px dotted #000;
    border-bottom: 1px dotted #000;
}

.rowcount {
    display: flex;
    flex: none;
    height: 23px;
    padding-left: 2px;
    border-top: 1px solid #8c93a8;
    background: linear-gradient(#fafafb, #dadce2);
    line-height: 21px;
}

.rowcount span + span::before {
    content: "|";
    margin: 0 4px;
}

/* Property panels on the right */
.side-panel {
    display: flex;
    flex: none;
    flex-direction: column;
    width: 300px;
}

.side-head {
    flex: none;
    height: 26px;
}

.side-trash {
    display: flex;
    flex: none;
    justify-content: flex-end;
    height: 36px;
    padding: 5px 5px 0 0;
    background-color: #ebebeb;
}

.side-trash svg {
    width: 18px;
    height: 20px;
}

.side-tools {
    justify-content: flex-end;
    gap: 9px;
    height: 25px;
}

.toolbar .overflow {
    width: 13px;
    height: 25px;
    padding: 0;
    background: linear-gradient(#a4a4a8, #44484e);
}

.overflow svg {
    display: block;
    width: 11px;
    height: 20px;
    margin: 0 auto;
}

.side-body {
    display: flex;
    flex: 1;
    min-height: 0;
}

.side-rows {
    flex: 1;
    contain: size;
    overflow: hidden;
    background-color: #fff;
}

.side-row {
    display: flex;
    align-items: center;
    justify-content: flex-end;
    height: 20px;
    border-right: 1px solid #c6c6c6;
    border-bottom: 1px solid #c6c6c6;
}

.side-row.band {
    border-bottom: none;
    background: linear-gradient(#fff, #f2f2f4 40%, #d3d5da);
    font-weight: bold;
}

.side-row.near {
    padding-right: 25px;
}

.side-row.head {
    height: 23px;
    background: linear-gradient(#fafafb, #dfe0e6);
}

.side-row.blue {
    gap: 8px;
    height: 23px;
    padding-right: 6px;
    border-color: #3399ff;
    background-color: #3399ff;
    color: #fff;
}

.side-row.lit {
    background-color: #99ccff;
    color: #fff;
}

.combo {
    width: 16px;
    height: 18px;
    margin-left: 16px;
    border: 1px solid #b8bcc8;
    background: linear-gradient(#fff 40%, #d4daea);
}

.hbar.corner {
    border-right: 17px solid #d0d0d0;
}

.index-title {
    height: 21px;
    margin-top: 5px;
    padding-right: 3px;
    background: linear-gradient(#e6e6e6, #c8c8c8);
}

/* Bottom tabs */
.tabs {
    display: flex;
    flex: none;
    align-items: center;
    height: 29px;
    padding-left: 6px;
    color: #1c2468;
}

.tabs button {
    height: 22px;
    padding: 0 4px;
    border-right: 1px solid #999;
}

.tabs .active {
    height: 26px;
    margin-left: 1px;
    border: 1px solid #6a84b4;
    border-radius: 0 0 4px 4px;
    background: linear-gradient(#a0b4d8, #c4d4ee);
}

.statusbar {
    display: flex;
    flex: none;
    height: 18px;
    padding-left: 2px;
    background: linear-gradient(#e6e6e6, #bdbdbd);
}

.statusbar span {
    flex: 1;
}

.statusbar i {
    width: 34px;
    border-left: 1px solid #8a98b8;
    background: linear-gradient(#dce2ee, #b4c0d8);
}

/* Popup menus */
.menu {
    position: absolute;
    padding: 1px 0;
    border: 1px solid #46587c;
    background-color: #fdfdfb;
    box-shadow: 3px 3px 4px rgba(0, 0, 0, 0.5);
}

.main-menu {
    top: 0;
    right: 57px;
    width: 434px;
}

.sub-menu {
    top: 261px;
    right: 489px;
    width: 366px;
}

.menu li {
    height: 23px;
    background: linear-gradient(to right, #f2f2f2 4px, #b2b2b2) 0 0 / 24px 100% no-repeat;
}

.menu li.plain {
    background: linear-gradient(#f0f0f0, #f0f0f0) 0 0 / 24px 100% no-repeat;
}

.menu .sep {
    height: 2px;
}

.menu .sep::after {
    content: "";
    display: block;
    height: 1px;
    margin-left: 27px;
    background-color: #a9a9ab;
}

.menu button {
    display: flex;
    align-items: center;
    width: 100%;
    height: 100%;
    padding: 0 24px 0 32px;
}

.menu button:disabled {
    color: #7c7c7c;
}

.menu .icon {
    margin: 0 12px 0 -28px;
}

.menu kbd {
    margin-left: auto;
    font: inherit;
}

.more {
    margin: 0 -16px 0 auto;
    border: 4px solid transparent;
    border-left: 5px solid #000;
    border-right: none;
}

.menu .open {
    display: grid;
    align-items: end;
}

.menu .open button {
    width: auto;
    height: 22px;
    margin: 0 2px 0 1px;
    padding: 0 21px 0 30px;
    border: 1px solid #3c4c78;
    background-color: #d3e4fb;
}
```
